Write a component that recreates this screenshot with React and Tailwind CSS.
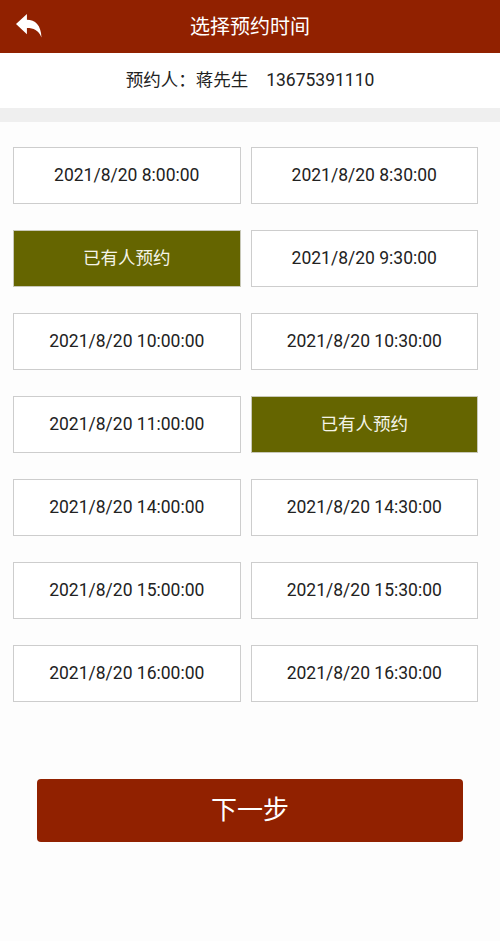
import React from "react";

const slots = [
  "2021/8/20 8:00:00",
  "2021/8/20 8:30:00",
  null,
  "2021/8/20 9:30:00",
  "2021/8/20 10:00:00",
  "2021/8/20 10:30:00",
  "2021/8/20 11:00:00",
  null,
  "2021/8/20 14:00:00",
  "2021/8/20 14:30:00",
  "2021/8/20 15:00:00",
  "2021/8/20 15:30:00",
  "2021/8/20 16:00:00",
  "2021/8/20 16:30:00",
];

const font = { fontFamily: 'Roboto, "Noto Sans CJK SC", sans-serif' };

export default function App() {
  return (
    <div className="w-[500px] h-[941px] bg-[#fdfdfd] flex flex-col" style={font}>
      <div className="h-[53px] bg-[#912100] relative flex items-center justify-center">
        <svg className="absolute left-[16px] top-[14px]" width="26" height="24" viewBox="0 0 25 23">
          <path
            d="M0 9.5 L10.5 0 L10.5 5.5 C18.5 5.5 24 10.5 24.5 22.5 C21.5 15.5 17 13.5 10.5 13.5 L10.5 19.5 Z"
            fill="#ffffff"
          />
        </svg>
        <span className="text-white text-[20px]">选择预约时间</span>
      </div>
      <div className="h-[55px] bg-white flex items-center justify-center text-[17.5px] text-[#222]">
        <span>预约人：蒋先生</span>
        <span className="ml-[18px]">13675391110</span>
      </div>
      <div className="h-[14px] bg-[#efefef]" />
      <div className="grid grid-cols-2 gap-x-[10px] gap-y-[26px] pl-[13px] pr-[22px] pt-[25px]">
        {slots.map((s, i) =>
          s ? (
            <div
              key={i}
              className="h-[57px] border border-[#cdcdcd] bg-white flex items-center justify-center text-[17.5px] text-[#222]"
            >
              {s}
            </div>
          ) : (
            <div
              key={i}
              className="h-[57px] border border-[#c8c8b8] bg-[#656500] flex items-center justify-center text-[17.5px] text-[#f4f4e8]"
            >
              已有人预约
            </div>
          )
        )}
      </div>
      <div className="px-[37px] mt-[77px]">
        <button className="w-[426px] h-[63px] bg-[#912100] rounded-[4px] text-white text-[26px] flex items-center justify-center">
          下一步
        </button>
      </div>
    </div>
  );
}
